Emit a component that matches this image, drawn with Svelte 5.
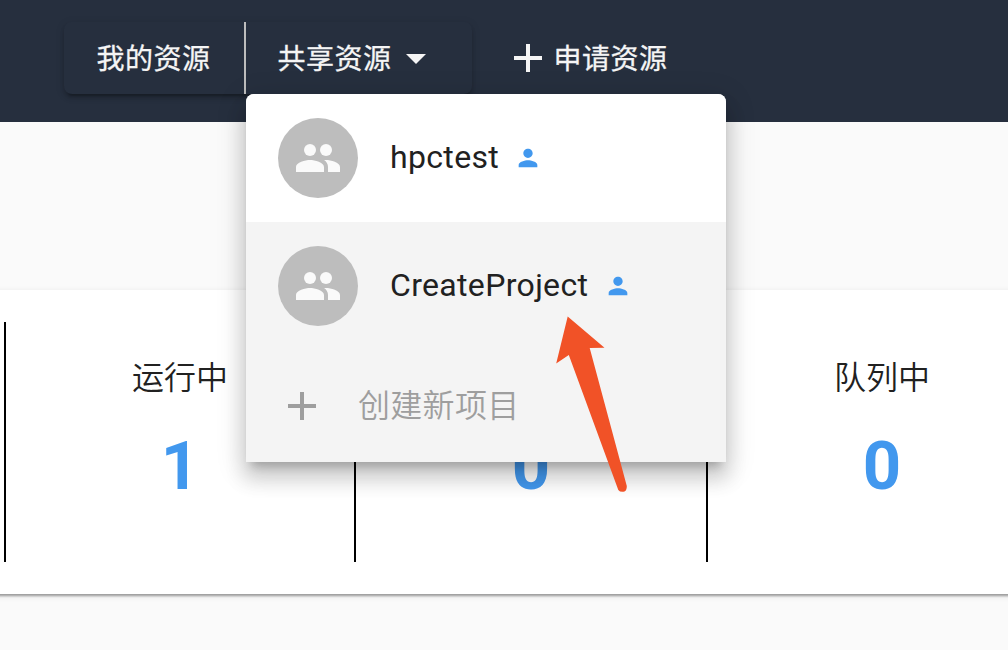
<script>
  const projects = [
    { name: 'hpctest', active: false },
    { name: 'CreateProject', active: true }
  ];
  const stats = [
    { label: '运行中', value: 1 },
    { label: '', value: 0 },
    { label: '队列中', value: 0 }
  ];
</script>

<div class="page">
  <header class="toolbar">
    <div class="group">
      <button class="tab mine"><span>我的资源</span></button>
      <div class="shared">
        <button class="tab share">
          <span>共享资源</span>
          <svg class="caret" viewBox="0 0 20 10"><path d="M0 0h20L10 10z" /></svg>
        </button>
        <div class="menu">
          {#each projects as project}
            <div class="item" class:active={project.active}>
              <span class="avatar">
                <svg viewBox="0 0 24 24"><circle cx="8" cy="8" r="3" /><circle cx="16" cy="8" r="3" /><path d="M8 13c-2.33 0-7 1.17-7 3.5V19h14v-2.5c0-2.33-4.67-3.5-7-3.5zm8 0c-.29 0-.62.02-.97.05 1.16.84 1.97 1.97 1.97 3.45V19h6v-2.5c0-2.33-4.67-3.5-7-3.5z" /></svg>
              </span>
              <span class="name">{project.name}</span>
              <svg class="person" viewBox="0 0 24 24"><path d="M12 12c2.21 0 4-1.79 4-4s-1.79-4-4-4-4 1.79-4 4 1.79 4 4 4zm0 2c-2.67 0-8 1.34-8 4v2h16v-2c0-2.66-5.33-4-8-4z" /></svg>
            </div>
          {/each}
          <div class="create">
            <svg class="plus" viewBox="0 0 28 28"><path d="M12 0h4v12h12v4H16v12h-4V16H0v-4h12z" /></svg>
            <span>创建新项目</span>
          </div>
          <svg class="arrow" viewBox="0 0 80 180"><path d="M17.7 4.5L54.5 35.8L39.7 36L76.8 174Q77 179 73.5 179.8Q70 180.2 68.3 178L18.8 43L6.2 51.5z" /></svg>
        </div>
      </div>
    </div>
    <button class="apply">
      <svg class="plus" viewBox="0 0 28 28"><path d="M12 0h4v12h12v4H16v12h-4V16H0v-4h12z" /></svg>
      <span>申请资源</span>
    </button>
  </header>
  <main class="card">
    {#each stats as stat}
      <section class="stat">
        <div class="label">{stat.label}</div>
        <div class="value">{stat.value}</div>
      </section>
    {/each}
  </main>
</div>

<style>
  :global(body) { background: #fafafa; overflow: hidden; }
  .page {
    width: 1008px; height: 650px; overflow: hidden; background: #fafafa;
    color: #212121; font-family: Roboto, 'Noto Sans CJK SC', sans-serif;
  }
  .toolbar {
    display: flex; box-sizing: border-box; height: 122px;
    padding: 22px 0 0 64px; background: #262f3e;
  }
  button {
    display: flex; align-items: center; padding: 0; border: 0; background: none;
    color: #f5f5f5; font: 400 28px/72px Roboto, 'Noto Sans CJK SC', sans-serif;
    letter-spacing: .5px; white-space: nowrap; -webkit-text-stroke: .3px #f5f5f5;
  }
  button span { padding-top: 4px; line-height: 68px; }
  .group {
    display: flex; width: 408px; height: 72px; border-radius: 8px;
    box-shadow: 0 6px 2px -4px #0003, 0 4px 4px #00000024, 0 2px 10px #0000001f;
  }
  .tab { height: 72px; }
  .mine { box-sizing: border-box; width: 182px; padding-left: 32.5px; border-right: 2px solid #bdbdbd; }
  .shared { position: relative; }
  .share { width: 226px; padding-left: 31.5px; gap: 14.5px; }
  .caret { width: 20px; height: 10px; margin-top: 2px; fill: #f5f5f5; }
  .apply { margin-left: 42px; height: 72px; gap: 11.5px; }
  .plus { width: 28px; height: 28px; flex: none; fill: currentColor; }
  .menu {
    position: absolute; z-index: 2; top: 72px; left: 0; width: 480px; height: 368px;
    border-radius: 8px 8px 0 0; background: #f4f4f4;
    box-shadow: 0 10px 10px -6px #0003, 0 16px 20px 2px #00000024, 0 6px 28px 4px #0000001f;
  }
  .item {
    display: flex; align-items: center; box-sizing: border-box; height: 128px;
    padding-left: 32px; background: #fff; border-radius: 8px 8px 0 0;
    font-size: 32px; letter-spacing: .33px;
  }
  .item.active { background: #f4f4f4; border-radius: 0; }
  .avatar {
    display: grid; place-items: center; width: 80px; height: 80px;
    border-radius: 50%; background: #bdbdbd;
  }
  .avatar svg { width: 48px; height: 48px; fill: #fafafa; }
  .name { margin-left: 32px; padding-bottom: 2px; line-height: 46px; }
  .person { width: 28px; height: 28px; margin-left: 15.3px; fill: #4298ee; }
  .create {
    display: flex; align-items: center; box-sizing: border-box; height: 112px;
    padding-left: 42px; gap: 42px; color: #9e9e9e; font-size: 32px; font-weight: 350; letter-spacing: .3px;
  }
  .create span { padding-bottom: 6px; font-family: 'Noto Sans CJK SC', sans-serif; }
  .arrow { position: absolute; top: 218px; left: 304px; width: 80px; height: 180px; overflow: visible; fill: #f15227; }
  .card {
    display: grid; grid-template-columns: 350px 352px 350px; box-sizing: border-box;
    height: 304px; margin: 168px -48px 0 -8px; padding: 32px 0 32px 12px; background: #fff;
    box-shadow: 0 4px 2px -2px #0003, 0 2px 2px #00000024, 0 2px 6px #0000001f;
  }
  .stat { border-left: 2px solid #000; text-align: center; }
  .label { height: 48px; margin-top: 29px; font: 350 32px/48px 'Noto Sans CJK SC', sans-serif; }
  .value { margin-top: 27px; font-size: 67px; line-height: 80px; font-weight: 700; color: #4298ee; }
</style>
